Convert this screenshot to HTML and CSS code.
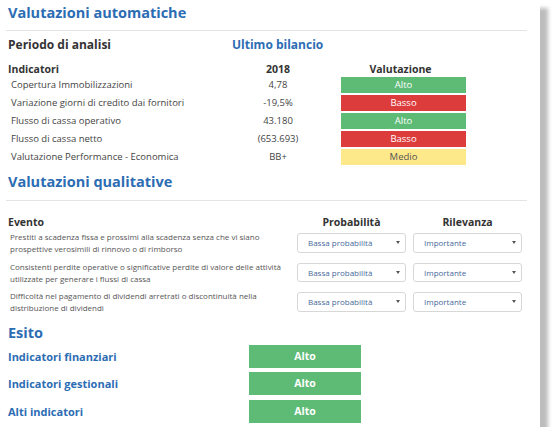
FILE: index.html
```html
<!DOCTYPE html>
<html lang="it">
<head>
  <meta charset="UTF-8">
  <title>Valutazioni</title>
  <link rel="stylesheet" href="styles.css">
</head>
<body>
  <div class="card">
    <h2 class="section-title">Valutazioni automatiche</h2>
    <hr class="divider">
    <div class="period">
      <span>Periodo di analisi</span>
      <span class="period-value">Ultimo bilancio</span>
    </div>

    <div class="indicators">
      <div class="ind-row ind-head">
        <span class="ind-label">Indicatori</span>
        <span class="ind-value">2018</span>
        <span class="ind-rating">Valutazione</span>
      </div>
      <div class="ind-row">
        <span class="ind-label">Copertura Immobilizzazioni</span>
        <span class="ind-value">4,78</span>
        <span class="badge badge-high">Alto</span>
      </div>
      <div class="ind-row">
        <span class="ind-label">Variazione giorni di credito dai fornitori</span>
        <span class="ind-value">-19,5%</span>
        <span class="badge badge-low">Basso</span>
      </div>
      <div class="ind-row">
        <span class="ind-label">Flusso di cassa operativo</span>
        <span class="ind-value">43.180</span>
        <span class="badge badge-high">Alto</span>
      </div>
      <div class="ind-row">
        <span class="ind-label">Flusso di cassa netto</span>
        <span class="ind-value">(653.693)</span>
        <span class="badge badge-low">Basso</span>
      </div>
      <div class="ind-row">
        <span class="ind-label">Valutazione Performance - Economica</span>
        <span class="ind-value">BB+</span>
        <span class="badge badge-mid">Medio</span>
      </div>
    </div>

    <h2 class="section-title qualitative">Valutazioni qualitative</h2>
    <hr class="divider divider-wide">

    <div class="events">
      <div class="event-row event-head">
        <span class="event-head-label">Evento</span>
        <span class="event-head-col">Probabilità</span>
        <span class="event-head-col">Rilevanza</span>
      </div>
      <div class="event-row">
        <p class="event-text">Prestiti a scadenza fissa e prossimi alla scadenza senza che vi siano prospettive verosimili di rinnovo o di rimborso</p>
        <div class="select"><span>Bassa probabilità</span><i class="caret"></i></div>
        <div class="select"><span>Importante</span><i class="caret"></i></div>
      </div>
      <div class="event-row">
        <p class="event-text">Consistenti perdite operative o significative perdite di valore delle attività utilizzate per generare i flussi di cassa</p>
        <div class="select"><span>Bassa probabilità</span><i class="caret"></i></div>
        <div class="select"><span>Importante</span><i class="caret"></i></div>
      </div>
      <div class="event-row">
        <p class="event-text">Difficoltà nel pagamento di dividendi arretrati o discontinuità nella distribuzione di dividendi</p>
        <div class="select"><span>Bassa probabilità</span><i class="caret"></i></div>
        <div class="select"><span>Importante</span><i class="caret"></i></div>
      </div>
    </div>

    <h2 class="section-title outcome-title">Esito</h2>
    <div class="outcome">
      <div class="outcome-row">
        <span class="outcome-label">Indicatori finanziari</span>
        <span class="outcome-badge">Alto</span>
      </div>
      <div class="outcome-row">
        <span class="outcome-label">Indicatori gestionali</span>
        <span class="outcome-badge">Alto</span>
      </div>
      <div class="outcome-row">
        <span class="outcome-label">Alti indicatori</span>
        <span class="outcome-badge">Alto</span>
      </div>
    </div>
  </div>
</body>
</html>
```

FILE: styles.css
```css
* {
  box-sizing: border-box;
}
body {
  margin: 0;
  background: #fff;
  font-family: 'Open Sans', 'Liberation Sans', Arial, sans-serif;
  color: #333;
}
.card {
  width: 540px;
  height: 427px;
  background: #fff;
  box-shadow: 8px 8px 4px #bdbdbd;
  padding: 0 13px 0 6px;
}
.section-title {
  margin: 0;
  padding: 3px 0 0 2px;
  font-size: 14.5px;
  line-height: 20px;
  font-weight: 700;
  color: #2c6cb3;
}
.divider {
  margin: 7px 0 0;
  height: 0;
  border: 0;
  border-top: 1px solid #e4e4e4;
}

/* Valutazioni automatiche */
.period {
  display: grid;
  grid-template-columns: 224px auto;
  margin-top: 6px;
  padding-left: 2px;
  font-size: 12px;
  line-height: 16px;
  font-weight: 700;
}
.period-value {
  color: #2c6cb3;
}
.indicators {
  margin-top: 9px;
}
.ind-row {
  display: grid;
  grid-template-columns: 232px 80px 148px;
  align-items: center;
  height: 18px;
  line-height: 18px;
  font-size: 9.5px;
  color: #444;
}
.ind-label {
  padding-left: 5px;
}
.ind-value {
  text-align: center;
}
.ind-head {
  height: 14px;
  line-height: 14px;
  font-size: 10.5px;
  font-weight: 700;
  color: #333;
}
.ind-head .ind-label {
  padding-left: 2px;
}
.ind-rating,
.badge {
  margin-left: 23px;
  text-align: center;
}
.ind-rating {
  padding-right: 6px;
}
.badge {
  height: 16px;
  line-height: 16px;
  color: #fff;
}
.badge-high { background: #5dbb75; }
.badge-low { background: #dc3c3c; }
.badge-mid { background: #fde88a; color: #555; }

/* Valutazioni qualitative */
.qualitative {
  margin-top: 3px;
}
.divider-wide {
  margin-top: 8px;
}
.events {
  margin-top: 14px;
  display: flex;
  flex-direction: column;
}
.event-row {
  display: grid;
  grid-template-columns: 284px 109px 109px;
  column-gap: 7px;
  min-height: 25px;
  margin-bottom: 4.5px;
}
.event-head {
  min-height: 0;
  margin-bottom: 2px;
  font-size: 10.5px;
  line-height: 14px;
  font-weight: 700;
}
.event-head-label {
  padding-left: 2px;
}
.event-head-col {
  text-align: center;
}
.event-text {
  margin: 0;
  padding: 0 8px 0 4px;
  font-size: 8px;
  line-height: 12px;
  color: #555;
}
.select {
  display: flex;
  align-items: center;
  justify-content: space-between;
  height: 19.5px;
  margin-top: 2px;
  padding: 0 5px 0 10px;
  border: 1px solid #d7d7d7;
  border-radius: 3px;
  font-size: 8px;
  color: #46699a;
}
.caret {
  width: 0;
  height: 0;
  border-left: 2px solid transparent;
  border-right: 2px solid transparent;
  border-top: 3px solid #555;
}

/* Esito */
.outcome {
  margin-top: 2px;
  display: flex;
  flex-direction: column;
  gap: 4.5px;
}
.outcome-row {
  display: grid;
  grid-template-columns: 243px 112px;
  align-items: center;
}
.outcome-label {
  padding-left: 2px;
  font-size: 11px;
  font-weight: 700;
  color: #2c6cb3;
}
.outcome-badge {
  height: 23px;
  line-height: 23px;
  text-align: center;
  background: #5dbb75;
  color: #fff;
  font-size: 10.5px;
  font-weight: 700;
}
```
